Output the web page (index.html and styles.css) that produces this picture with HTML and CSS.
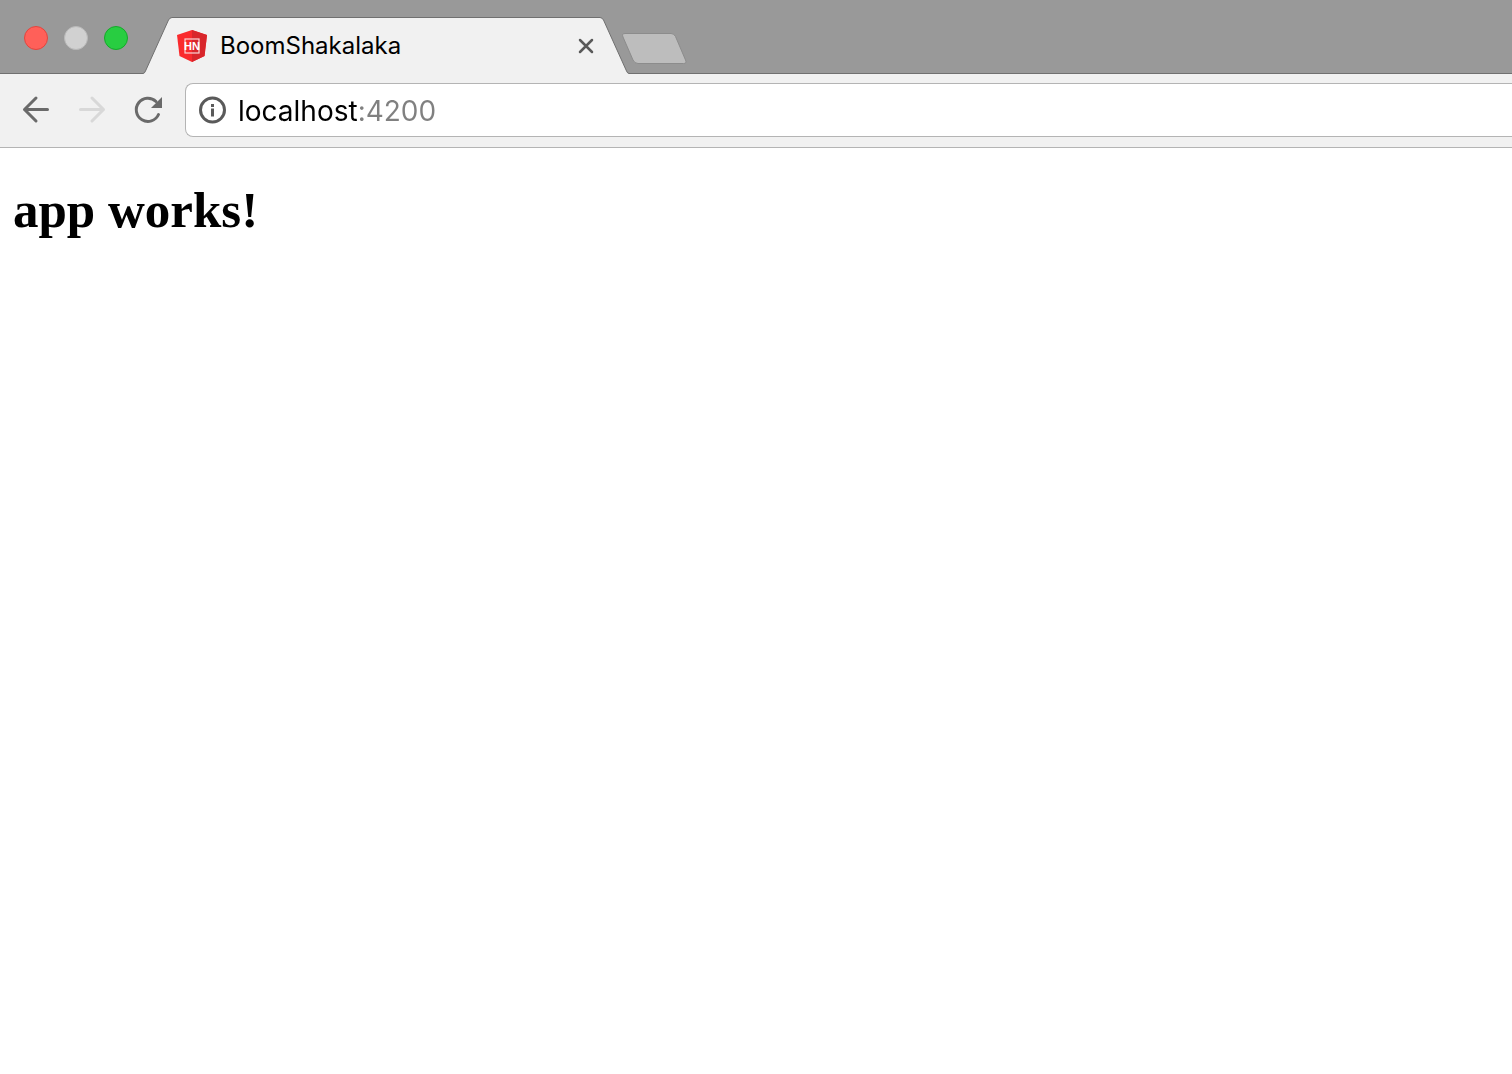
FILE: index.html
```html
<!DOCTYPE html>
<html lang="en">
<head>
<meta charset="utf-8">
<title>BoomShakalaka</title>
<link rel="stylesheet" href="styles.css">
</head>
<body>
<header class="tab-strip">
  <div class="window-controls">
    <button class="light light-close" aria-label="Close window"></button>
    <button class="light light-minimize" aria-label="Minimize window"></button>
    <button class="light light-zoom" aria-label="Zoom window"></button>
  </div>
  <div class="tab">
    <svg class="tab-shape" viewBox="0 0 486 57" aria-hidden="true">
      <path d="M0 57 L0 56.500 Q1.500 56.500 2.500 54 L25.500 3 Q27 .5 29 .5 H457 Q459 .5 460.500 3 L483.500 54 Q484.500 56.500 486 56.500 L486 57 Z" fill="#f1f1f1"/>
      <path d="M0 56.500 Q1.500 56.500 2.500 54 L25.500 3 Q27 .5 29 .5 H457 Q459 .5 460.500 3 L483.500 54 Q484.500 56.500 486 56.500" fill="none" stroke="#707070"/>
    </svg>
    <svg class="favicon" viewBox="0 0 30 32" aria-hidden="true">
      <path d="M15 0 L30 5 L27.500 26 L15 32 L2.500 26 L0 5 Z" fill="#fa2a2d"/>
      <path d="M15 0 L30 5 L27.500 26 L15 32 Z" fill="#d8262b"/>
      <rect x="8" y="9" width="14" height="14" fill="none" stroke="#fbd5d5" stroke-width="1.200"/>
      <text class="favicon-text" x="15" y="20" text-anchor="middle">HN</text>
    </svg>
    <span class="tab-title">BoomShakalaka</span>
    <button class="tab-close" aria-label="Close tab">
      <svg viewBox="0 0 16 16" width="16" height="16"><path d="M2 2 L14 14 M14 2 L2 14" fill="none" stroke="#5a5a5a" stroke-width="2.500" stroke-linecap="round"/></svg>
    </button>
  </div>
  <button class="new-tab" aria-label="New tab">
    <svg viewBox="0 0 66 32" width="66" height="32"><path d="M4 .5 H50 Q53 .5 54.500 3.500 L64.500 27 Q66 30.500 62.500 30.500 H17 Q13.500 30.500 12 27 L2 4 Q.5 .5 4 .5 Z" fill="#bdbdbd" stroke="#8c8c8c"/></svg>
  </button>
</header>
<nav class="toolbar">
  <button class="nav-button" aria-label="Back">
    <svg viewBox="0 0 32 32" width="32" height="32"><path d="M27.500 15.500 H4.500 M16 4 L4.500 15.500 L16 27" fill="none" stroke="#6a6a6a" stroke-width="3" stroke-linecap="round" stroke-linejoin="round"/></svg>
  </button>
  <button class="nav-button" aria-label="Forward" disabled>
    <svg viewBox="0 0 32 32" width="32" height="32"><path d="M4.500 15.500 H27.500 M16 4 L27.500 15.500 L16 27" fill="none" stroke="#d8d8d8" stroke-width="3" stroke-linecap="round" stroke-linejoin="round"/></svg>
  </button>
  <button class="nav-button" aria-label="Reload">
    <svg viewBox="0 0 32 32" width="32" height="32"><path d="M26.500 20.500 A11.600 11.600 0 1 1 24 7.500" fill="none" stroke="#6a6a6a" stroke-width="3" stroke-linecap="round"/><path d="M30 3 V14 H19 Z" fill="#6a6a6a"/></svg>
  </button>
  <div class="address-bar">
    <svg class="info-icon" viewBox="0 0 28 28" width="28" height="28" aria-hidden="true"><circle cx="14.500" cy="14" r="12" fill="none" stroke="#5a5a5a" stroke-width="3"/><path d="M13 8 h3 v3 h-3 Z M13 12.500 h3 v8 h-3 Z" fill="#5a5a5a"/></svg>
    <input class="address" type="text" value="localhost:4200" aria-label="Address" spellcheck="false">
  </div>
</nav>
<main class="page">
  <h1 class="page-title">app works!</h1>
</main>
</body>
</html>
```

FILE: styles.css
```css
* {
  box-sizing: border-box;
}

body {
  margin: 0;
  background: #fff;
  color: #000;
  font-family: Inter, "Liberation Sans", sans-serif;
}

button {
  padding: 0;
  border: 0;
  background: none;
}

svg {
  display: block;
}

.tab-strip {
  display: flex;
  align-items: flex-start;
  height: 74px;
  background: #999;
  border-bottom: 1px solid #707070;
}

.window-controls {
  display: flex;
  gap: 16px;
  width: 143px;
  padding: 26px 0 0 24px;
}

.light {
  width: 24px;
  height: 24px;
  border: 1px solid;
  border-radius: 50%;
}

.light-close {
  background: #ff6059;
  border-color: #e2453e;
}

.light-minimize {
  background: #d1d1d1;
  border-color: #b9b9b9;
}

.light-zoom {
  background: #28cd41;
  border-color: #15a92a;
}

.tab {
  position: relative;
  display: flex;
  align-items: center;
  width: 486px;
  height: 57px;
  margin-top: 17px;
  padding: 0 35px 0 34px;
}

.tab-shape {
  position: absolute;
  inset: 0;
  width: 100%;
  height: 100%;
}

.favicon,
.tab-title,
.tab-close {
  position: relative;
}

.favicon {
  width: 30px;
  height: 32px;
}

.favicon-text {
  fill: #fff;
  font: bold 11px "Liberation Sans Narrow", "Liberation Sans", sans-serif;
}

.tab-title {
  flex: 1;
  margin-left: 13px;
  font-size: 24px;
  line-height: 32px;
}

.new-tab {
  margin-top: 33px;
  margin-left: -8px;
}

.toolbar {
  display: flex;
  align-items: center;
  gap: 24px;
  height: 74px;
  padding: 0 0 1px 20px;
  background: #f1f1f1;
  border-bottom: 1px solid #b4b4b4;
}

.address-bar {
  display: flex;
  flex: 1;
  align-items: center;
  gap: 12px;
  height: 54px;
  margin-left: -3px;
  padding-left: 12px;
  background: #fff;
  border: 1px solid #b4b4b4;
  border-right: 0;
  border-radius: 8px 0 0 8px;
}

.address {
  flex: 1;
  min-width: 0;
  height: 38px;
  padding: 2px 0 0;
  border: 0;
  outline: 0;
  /* The port is shown in grey after the host name. */
  background: linear-gradient(to right, #000 119px, #808080 119px);
  background-clip: text;
  color: transparent;
  font: 28px/36px Inter, "Liberation Sans", sans-serif;
}

.page {
  padding: 30px 13px;
}

.page-title {
  margin: 0;
  font: bold 51px/64px "Liberation Serif", serif;
}
```
